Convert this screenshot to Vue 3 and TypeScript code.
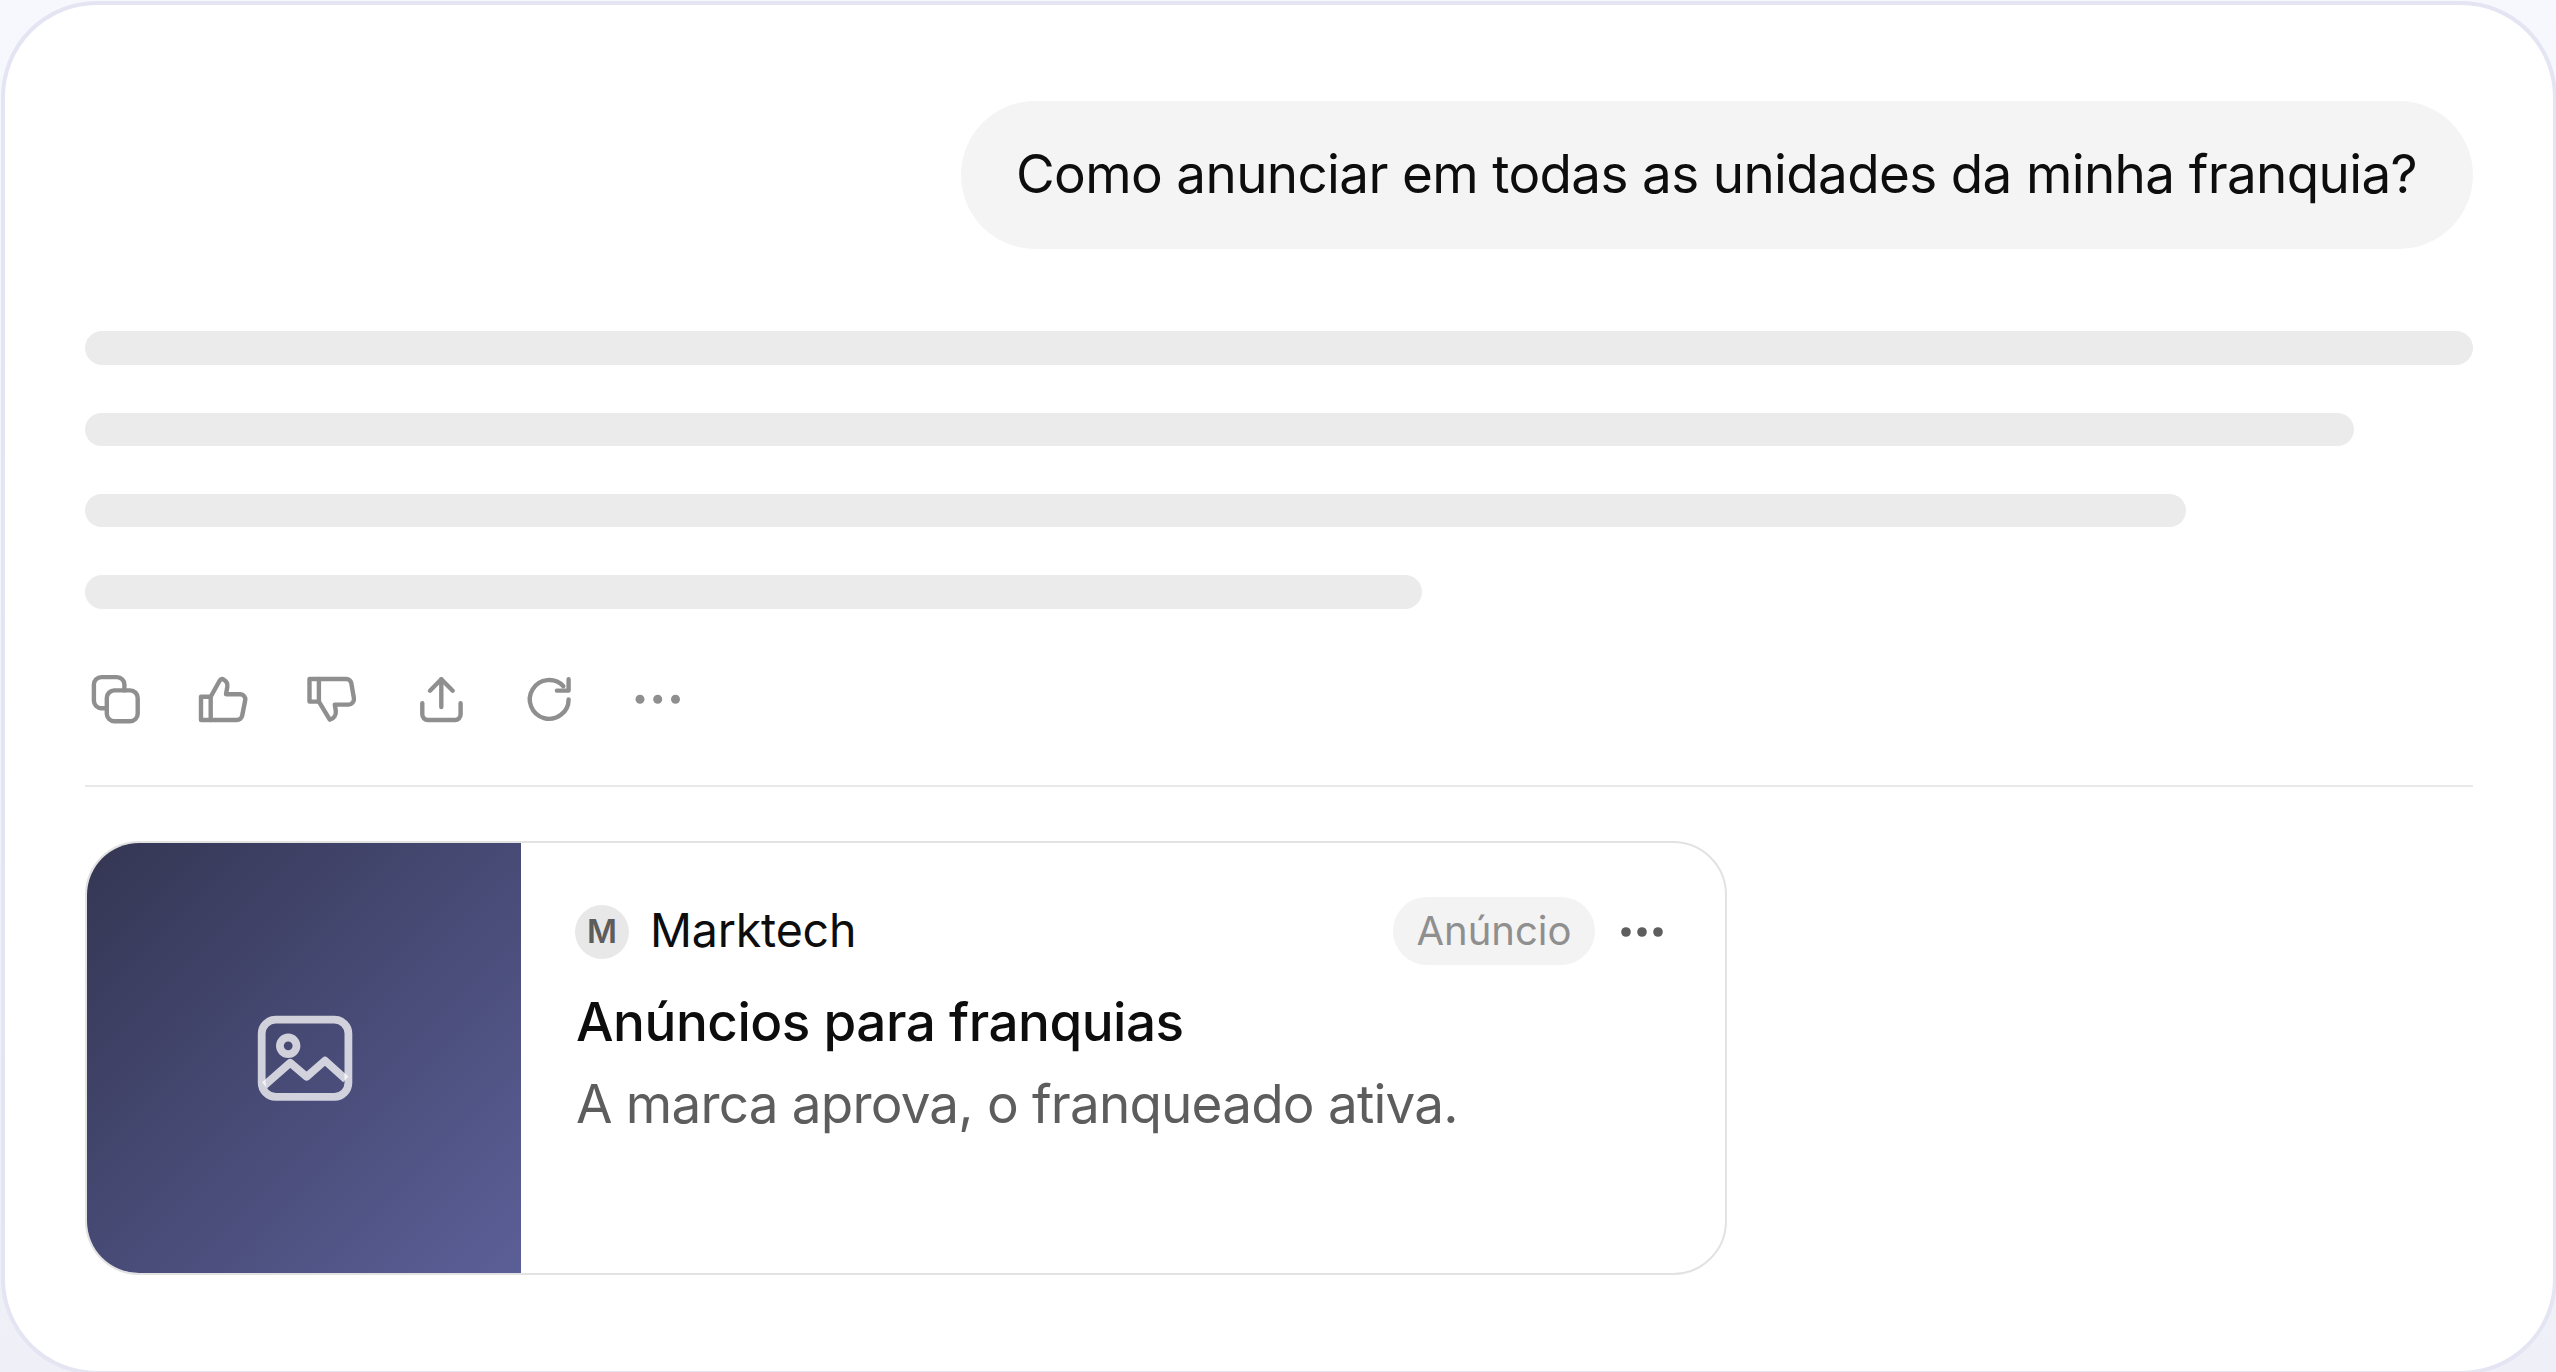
<script setup lang="ts">
interface Action {
  name: string
  paths: string[]
  dots?: number[]
}

const question = 'Como anunciar em todas as unidades da minha franquia?'

const lines: number[] = [100, 95, 88, 56]

const actions: Action[] = [
  {
    name: 'Copiar',
    paths: [
      'M29.3 22.4H45.2a7.5 7.5 0 0 1 7.5 7.5V45.7a7.5 7.5 0 0 1-7.5 7.5H29.3a7.5 7.5 0 0 1-7.5-7.5V29.9a7.5 7.5 0 0 1 7.5-7.5Z',
      'M39.4 22.4V16.6a7.5 7.5 0 0 0-7.5-7.5H16.4a7.5 7.5 0 0 0-7.5 7.5V32.7a7.5 7.5 0 0 0 7.5 7.5H21.8',
    ],
  },
  {
    name: 'Gostei',
    paths: [
      'M8 28.7H17.7V52H8Z',
      'M17.7 28.7 26.6 12.8c1-1.8 2.6-2.3 4-1.2 3 1.6 4.2 4.2 3.7 7.4L33 26.2H47.3a5 5 0 0 1 4.9 6L49.2 47.5a5.5 5.5 0 0 1-5.4 4.5H17.7',
    ],
  },
  {
    name: 'Não gostei',
    paths: [
      'M7.5 11H16.9V33.6H7.5Z',
      'M16.9 11H44.3a5 5 0 0 1 5 4.2L51.9 30.2a5.5 5.5 0 0 1-5.4 6.4H32.8L33.8 43c.4 3.8-1.6 7.5-6 8.7L16.9 33.6',
    ],
  },
  {
    name: 'Compartilhar',
    paths: ['M31.3 11.3V39', 'M20 22.7 31.3 11.3 42.7 22.7', 'M12.3 35.2V46.5a5.5 5.5 0 0 0 5.5 5.5H45.1a5.5 5.5 0 0 0 5.5-5.5V35.2'],
  },
  {
    name: 'Tentar de novo',
    paths: ['M50.6 31.4A19.4 19.4 0 1 1 45.4 18.2', 'M50.6 11.2V22.6H38.9'],
  },
  { name: 'Mais', paths: [], dots: [13, 30.7, 48.5] },
]
</script>

<template>
  <main class="stage">
    <section class="chat">
      <div class="bubble">{{ question }}</div>

      <div class="answer">
        <div v-for="w in lines" :key="w" class="line" :style="{ width: w + '%' }"></div>
      </div>

      <div class="actions">
        <svg v-for="a in actions" :key="a.name" class="action" viewBox="0 0 62.5 62.5" :aria-label="a.name">
          <path v-for="d in a.paths" :key="d" :d="d" />
          <circle v-for="x in a.dots ?? []" :key="x" class="dot" :cx="x" cy="31.3" r="4.5" />
        </svg>
      </div>

      <hr class="divider" />

      <article class="ad">
        <div class="thumb">
          <svg class="picture" viewBox="0 0 100 100">
            <rect x="6.7" y="11.6" width="86.7" height="77.2" rx="14" />
            <circle cx="33.2" cy="37.8" r="8.3" />
            <path d="M9.6 77.2 35.2 54.8 51.6 68.8 70 52.6 90.8 71.4" />
          </svg>
        </div>
        <div class="body">
          <header class="head">
            <span class="avatar">M</span>
            <span class="brand">Marktech</span>
            <span class="tag">Anúncio</span>
            <svg class="more" viewBox="0 0 48 12">
              <circle cx="8" cy="6" r="4.8" />
              <circle cx="24" cy="6" r="4.8" />
              <circle cx="40" cy="6" r="4.8" />
            </svg>
          </header>
          <h2 class="title">Anúncios para franquias</h2>
          <p class="desc">A marca aprova, o franqueado ativa.</p>
        </div>
      </article>
    </section>
  </main>
</template>

<style>
body {
  margin: 0;
  overflow: hidden;
}
</style>

<style scoped>
.stage {
  box-sizing: border-box;
  width: 2556px;
  height: 1372px;
  padding: 1px 0 0 1px;
  overflow: hidden;
  background: linear-gradient(180deg, #f7f7fe 0%, #eff0f7 100%);
  font-family: Inter, "Liberation Sans", sans-serif;
  color: #0d0d0d;
}

.chat {
  box-sizing: border-box;
  display: flex;
  flex-direction: column;
  width: 2556px;
  height: 1374px;
  padding: 96px 80px 0 80px;
  border: 4px solid #e4e4f2;
  border-radius: 96px;
  background: #fff;
}

.bubble {
  box-sizing: border-box;
  align-self: flex-end;
  width: 1512px;
  height: 148px;
  padding: 0 0 2px 55px;
  border-radius: 74px;
  background: #f4f4f4;
  font-size: 53px;
  letter-spacing: -0.65px;
  line-height: 146px;
  white-space: nowrap;
}

.answer {
  display: flex;
  flex-direction: column;
  gap: 48px;
  margin-top: 82.3px;
}

.line {
  height: 33.33px;
  border-radius: 17px;
  background: #ebebeb;
}

.actions {
  display: flex;
  gap: 45.83px;
  margin-top: 59.7px;
}

.action {
  display: block;
  width: 62.5px;
  height: 62.5px;
  fill: none;
  stroke: #8f8f8f;
  stroke-width: 4.4;
  stroke-linecap: round;
  stroke-linejoin: round;
}

.dot {
  fill: #8f8f8f;
  stroke: none;
}

.divider {
  width: 100%;
  height: 2px;
  margin: 54.2px 0 0;
  border: 0;
  background: #e9e9e9;
}

.ad {
  box-sizing: border-box;
  display: flex;
  width: 1642px;
  height: 434px;
  margin-top: 54px;
  border: 2px solid #e2e2e2;
  border-radius: 54px;
  overflow: hidden;
}

.thumb {
  display: flex;
  align-items: center;
  justify-content: center;
  width: 434px;
  flex: none;
  background: linear-gradient(135deg, #343653, #5b5f97);
}

.picture {
  width: 100px;
  height: 100px;
  margin: 1px 0 0 1px;
  fill: none;
  stroke: rgba(255, 255, 255, 0.75);
  stroke-width: 7.8;
  stroke-linejoin: round;
}

.body {
  flex: 1;
  padding: 54px 54px 0;
}

.head {
  display: flex;
  align-items: center;
  height: 68px;
}

.avatar {
  width: 54px;
  height: 54px;
  margin-top: 2px;
  border-radius: 50%;
  background: #e8e8e8;
  color: #5d5d5d;
  font-size: 32.5px;
  font-weight: 600;
  line-height: 53px;
  text-align: center;
}

.brand {
  margin-left: 21px;
  padding-bottom: 2px;
  font-size: 46.5px;
  letter-spacing: -0.2px;
  line-height: 66px;
}

.tag {
  box-sizing: border-box;
  width: 202px;
  height: 68px;
  margin-left: auto;
  border-radius: 34px;
  background: #f3f3f3;
  color: #8f8f8f;
  font-size: 40px;
  line-height: 67px;
  text-align: center;
}

.more {
  width: 48px;
  height: 12px;
  margin: 2px 5px 0 23px;
  fill: #5d5d5d;
}

.title,
.desc {
  margin: 0;
  padding-left: 1px;
  font-size: 53px;
  line-height: 82px;
  white-space: nowrap;
}

.title {
  margin-top: 16px;
  font-weight: 500;
  letter-spacing: -0.48px;
}

.desc {
  color: #5d5d5d;
  font-weight: 400;
  letter-spacing: -0.8px;
}
</style>
